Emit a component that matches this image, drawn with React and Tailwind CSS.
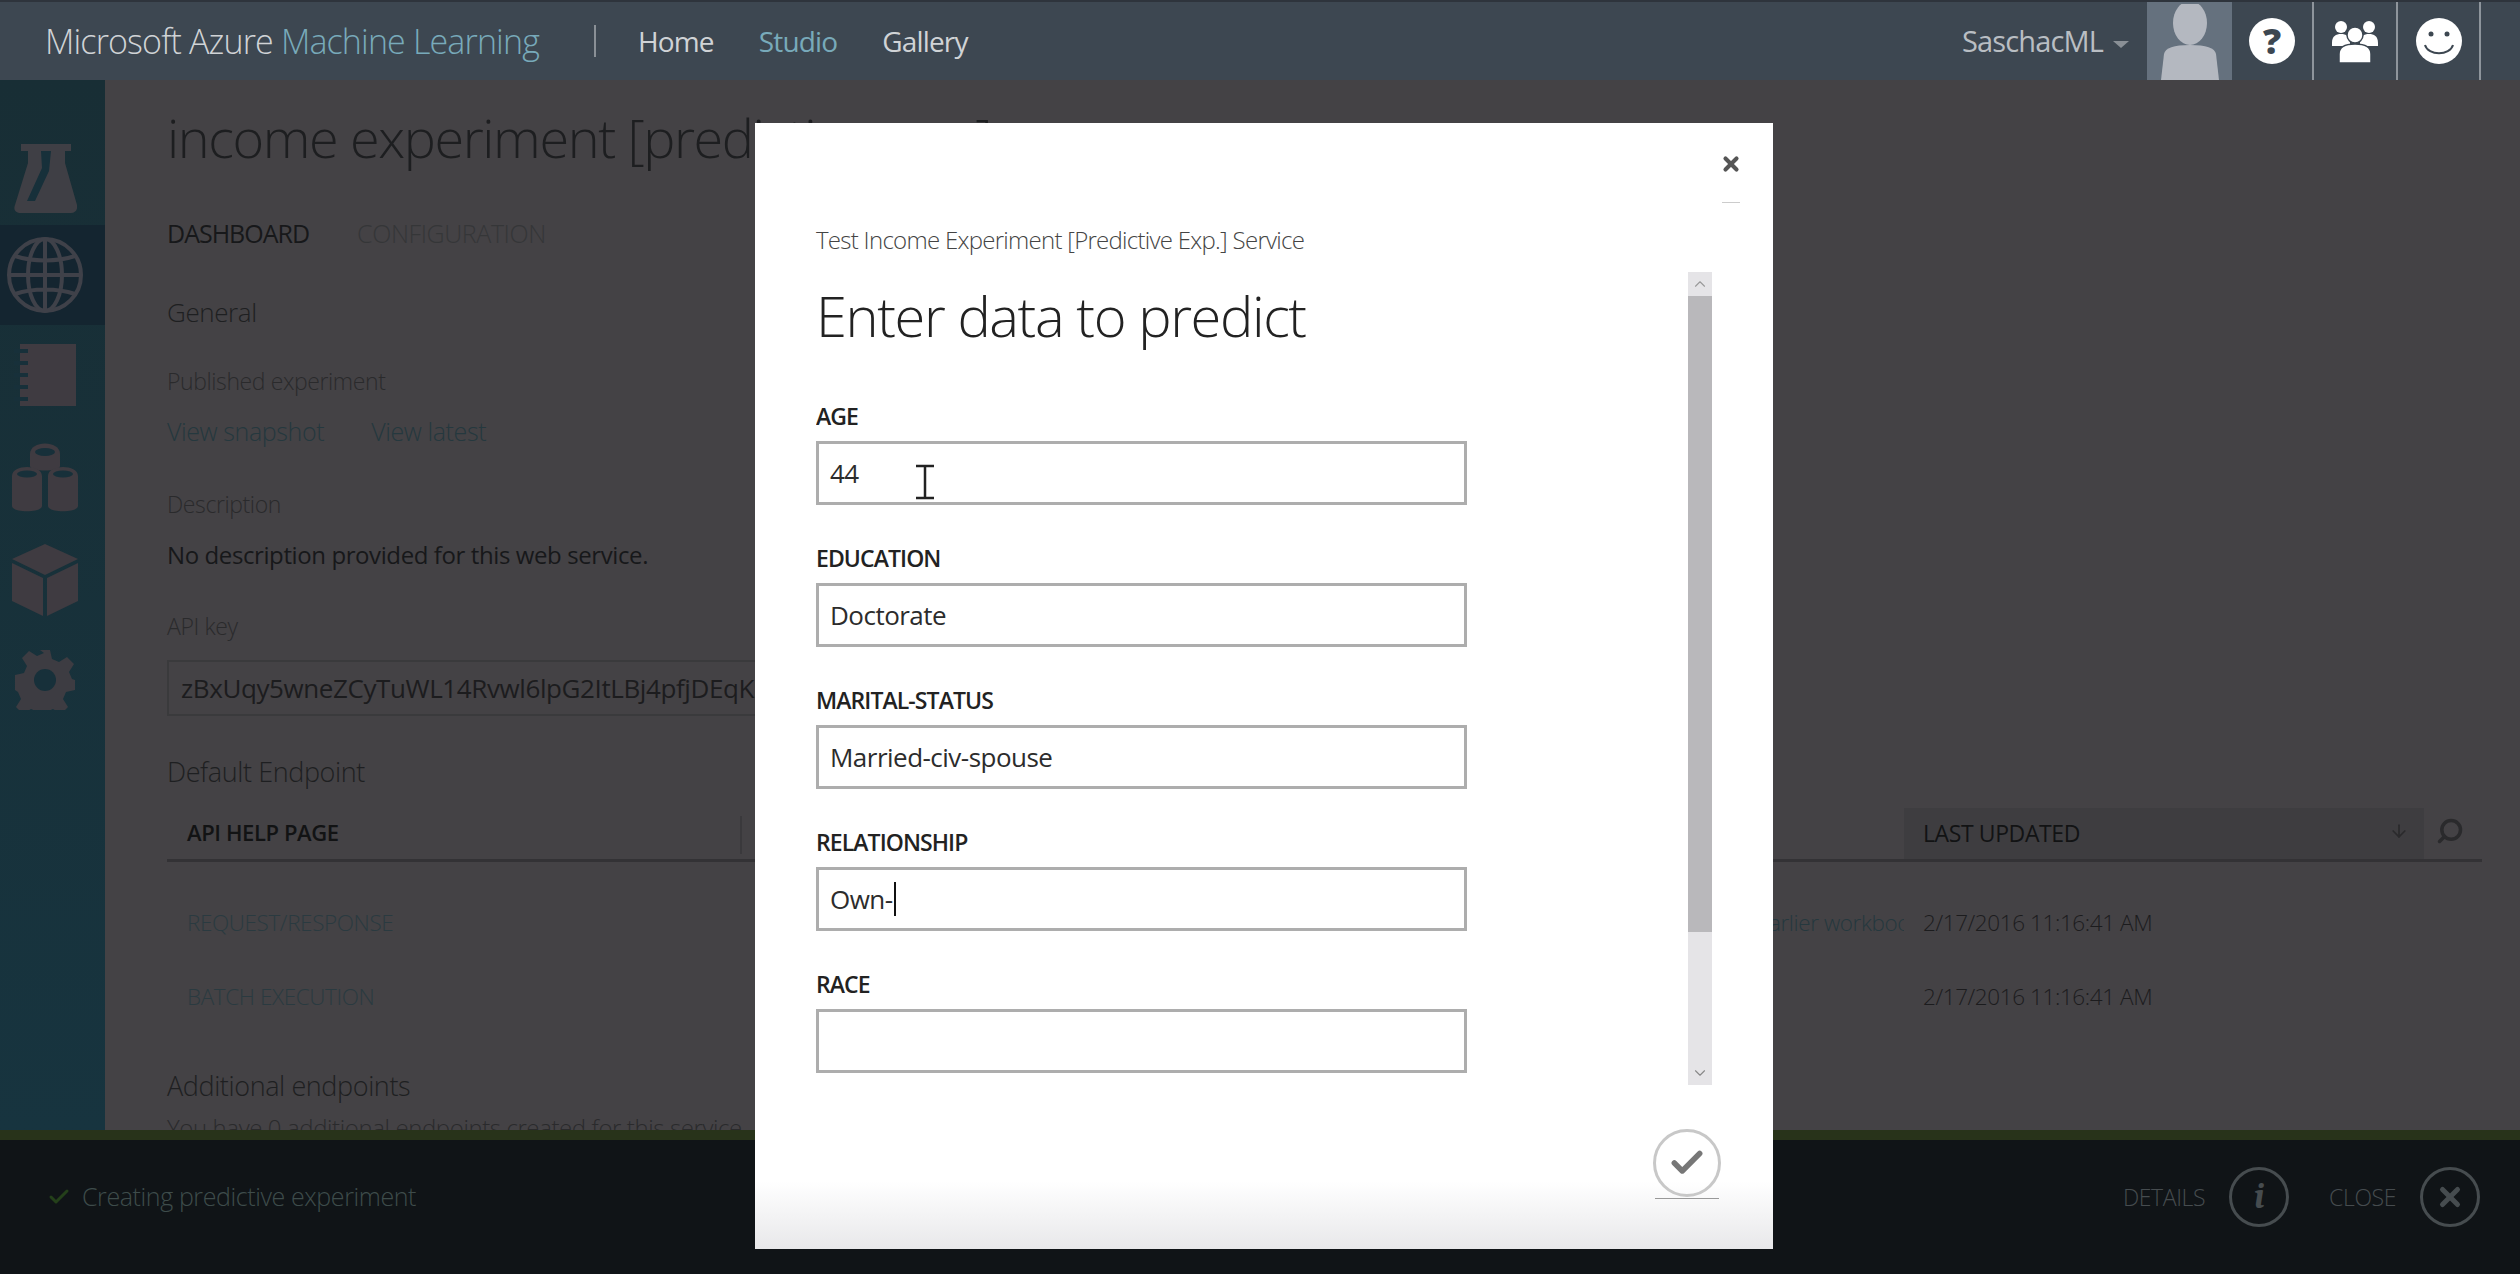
import { Check, ChevronDown, ChevronUp, Search, ArrowDown, X } from "lucide-react";

const font = { fontFamily: '"Open Sans", "Noto Sans", sans-serif' };

const FlaskIcon = () => (
  <svg width="64" height="72" viewBox="0 0 64 72" fill="#3f3f45">
    <path d="M8 2h50v7h-6v12l12 42c1 5-2 8-6 8H8c-5 0-8-3-6-8L15 21V9H8z" />
    <path d="M28 9h10l-2 20-14 30h-8l15-33z" fill="#17303a" />
  </svg>
);

const GlobeIcon = () => (
  <svg width="78" height="78" viewBox="0 0 78 78" fill="none" stroke="#3f4149" strokeWidth="4">
    <circle cx="39" cy="39" r="36" />
    <ellipse cx="39" cy="39" rx="17" ry="36" />
    <path d="M39 3v72M3 39h72M9 20c18 6 42 6 60 0M9 58c18-6 42-6 60 0" />
  </svg>
);

const NotebookIcon = () => (
  <svg width="62" height="64" viewBox="0 0 62 64" fill="#3f3b41">
    <path d="M6 1h56v62H6z" />
    <path d="M0 8h14M0 20h14M0 32h14M0 44h14M0 56h14" stroke="#17303a" strokeWidth="4" fill="none" />
  </svg>
);

const BoxesIcon = () => (
  <svg width="68" height="72" viewBox="0 0 68 72" fill="#3f3b41">
    <path d="M19 12c0-14 30-14 30 0v12c0 6-30 6-30 0z" />
    <ellipse cx="34" cy="10" rx="10" ry="4" fill="#17303a" />
    <path d="M1 34c0-12 30-12 30 0v30c0 7-30 7-30 0zM37 34c0-12 30-12 30 0v30c0 7-30 7-30 0z" />
    <ellipse cx="16" cy="32" rx="10" ry="3.5" fill="#17303a" />
    <ellipse cx="52" cy="32" rx="10" ry="3.5" fill="#17303a" />
  </svg>
);

const CubeIcon = () => (
  <svg width="66" height="72" viewBox="0 0 66 72" fill="#3f3b41">
    <path d="M33 0l33 15-33 16L0 15z" />
    <path d="M0 19l31 15v38L0 57zM35 34l31-15v38L35 72z" />
  </svg>
);

const GearIcon = () => (
  <svg width="60" height="60" viewBox="0 0 60 60" fill="#3d3c42">
    <path d="M25 0h10l2 9 7 3 8-5 7 7-5 8 3 7 3 1v10l-9 2-3 7 5 8-7 7-8-5-7 3-2 9H25l-2-9-7-3-8 5-7-7 5-8-3-7-3-2V25l9-2 3-7-5-8 7-7 8 5 7-3z" />
    <circle cx="30" cy="30" r="11" fill="#17303a" />
  </svg>
);

const AvatarIcon = () => (
  <svg width="70" height="76" viewBox="0 0 70 76" fill="#b4b8c0">
    <ellipse cx="35" cy="19" rx="17" ry="22" />
    <path d="M6 76l3-26c1-6 10-9 26-9s25 3 26 9l3 26z" />
  </svg>
);

const TeamIcon = () => (
  <svg width="46" height="44" viewBox="0 0 46 44" fill="#fff">
    <circle cx="9" cy="8" r="6" />
    <circle cx="37" cy="8" r="6" />
    <path d="M0 24c0-7 4-9 9-9s9 2 9 9v3H0zM28 24c0-7 4-9 9-9s9 2 9 9v3H28z" />
    <circle cx="23" cy="16" r="8" stroke="#3d4751" strokeWidth="1.5" />
    <path d="M7 44V35c0-7 6-10 16-10s16 3 16 10v9z" stroke="#3d4751" strokeWidth="1.5" />
  </svg>
);

const SmileIcon = () => (
  <svg width="46" height="46" viewBox="0 0 46 46">
    <circle cx="23" cy="23" r="23" fill="#fff" />
    <circle cx="15" cy="16" r="2.5" fill="#3d4751" />
    <circle cx="31" cy="16" r="2.5" fill="#3d4751" />
    <path d="M9 27c3 11 25 11 28 0" fill="none" stroke="#3d4751" strokeWidth="2" />
  </svg>
);

const TextCursor = () => (
  <svg width="20" height="36" viewBox="0 0 20 36" fill="none" stroke="#222" strokeWidth="2.5">
    <path d="M1 2h18M1 34h18M10 2v32" />
  </svg>
);

const fields = [
  { label: "AGE", value: "44" },
  { label: "EDUCATION", value: "Doctorate" },
  { label: "MARITAL-STATUS", value: "Married-civ-spouse" },
  { label: "RELATIONSHIP", value: "Own-", caret: true },
  { label: "RACE", value: "" },
];

const Field = ({ label, value, caret }) => (
  <div className="mb-[40px]">
    <div className="h-[26px] flex items-center text-[23px] font-semibold tracking-[-0.04em] text-[#222]">{label}</div>
    <div className="relative mt-[12px] h-[64px] w-[651px] border-[3px] border-[#adadad] bg-white pl-[11px] flex items-center text-[26px] tracking-[-0.02em] text-[#2c2c2c]">
      {value}
      {caret && <span className="ml-px h-[34px] w-[2px] bg-[#111]" />}
    </div>
  </div>
);

const Modal = () => (
  <div className="absolute left-[755px] top-[123px] w-[1018px] h-[1126px] bg-[linear-gradient(to_bottom,#fff_94%,#e8e8ea_100%)]">
    <div className="flex justify-end pt-[30px] pr-[31px] h-[81px]">
      <div className="flex flex-col items-center">
        <X size={22} strokeWidth={4.5} color="#555" />
        <div className="mt-[27px] w-[18px] h-px bg-[#ccc]" />
      </div>
    </div>
    <div className="pl-[61px]">
      <div className="mt-[22px] h-[28px] flex items-center text-[24px] font-light tracking-[-0.03em] text-[#444]">
        Test Income Experiment [Predictive Exp.] Service
      </div>
      <div className="flex mt-[18px]">
        <div className="h-[813px] overflow-hidden">
          <div className="mt-[8px] mb-[53px] h-[70px] flex items-center text-[56px] font-light tracking-[-0.025em] text-[#222]">
            Enter data to predict
          </div>
          {fields.map((f) => (
            <Field key={f.label} {...f} />
          ))}
        </div>
        <div className="ml-[221px] w-[24px] h-[813px] bg-[#e5e4e7] flex flex-col">
          <div className="h-[24px] flex items-center justify-center">
            <ChevronUp size={18} strokeWidth={1.5} color="#999" />
          </div>
          <div className="h-[636px] bg-[#b9b8bb]" />
          <div className="mt-auto h-[24px] flex items-center justify-center">
            <ChevronDown size={18} strokeWidth={1.5} color="#888" />
          </div>
        </div>
      </div>
    </div>
    <div className="flex justify-end pr-[52px] mt-[44px]">
      <div className="flex flex-col items-center">
        <div className="w-[68px] h-[68px] rounded-full border-[3px] border-[#c8c8c8] flex items-center justify-center">
          <Check size={38} strokeWidth={3.5} color="#777" />
        </div>
        <div className="mt-px w-[64px] h-px bg-[#999]" />
      </div>
    </div>
    <div className="absolute left-[160px] top-[341px]">
      <TextCursor />
    </div>
  </div>
);

const Header = () => (
  <div className="h-[80px] shrink-0 bg-[#3d4751] border-t-2 border-[#2e343c] flex items-center pl-[45px] pr-[39px] text-[#d0d3d6]">
    <div className="text-[34px] font-light tracking-[-0.025em] whitespace-nowrap">
      Microsoft Azure <span className="text-[#78aaba]">Machine Learning</span>
    </div>
    <div className="ml-[55px] h-[32px] w-[2px] bg-[#8a9096]" />
    <div className="ml-[42px] text-[28px] tracking-[-0.03em]">Home</div>
    <div className="ml-[45px] text-[28px] tracking-[-0.03em] text-[#78aaba]">Studio</div>
    <div className="ml-[45px] text-[28px] tracking-[-0.03em]">Gallery</div>
    <div className="ml-auto flex items-center h-full">
      <div className="text-[29px] tracking-[-0.03em] text-[#b9bec3]">SaschacML</div>
      <div className="ml-[10px] mt-[6px] w-0 h-0 border-x-[8px] border-x-transparent border-t-[7px] border-t-[#8a9096]" />
      <div className="ml-[18px] w-[85px] h-full bg-[#65717e] flex items-end justify-center overflow-hidden">
        <AvatarIcon />
      </div>
      <div className="w-[82px] h-full flex items-center justify-center border-r-2 border-[#8e959c]">
        <div className="w-[46px] h-[46px] rounded-full bg-white flex items-center justify-center text-[36px] font-extrabold text-[#3d4751]">?</div>
      </div>
      <div className="w-[84px] h-full flex items-center justify-center border-r-2 border-[#8e959c]">
        <TeamIcon />
      </div>
      <div className="w-[83px] h-full flex items-center justify-center border-r-2 border-[#8e959c]">
        <SmileIcon />
      </div>
    </div>
  </div>
);

const Sidebar = () => (
  <div className="w-[105px] shrink-0 bg-[linear-gradient(to_bottom,#182e35,#17343f)] flex flex-col pt-[50px]">
    <div className="h-[95px] flex items-center justify-center pr-[16px]"><FlaskIcon /></div>
    <div className="h-[100px] bg-[#142530] flex items-center justify-center pr-[16px]"><GlobeIcon /></div>
    <div className="h-[100px] flex items-center justify-center pr-[16px]"><NotebookIcon /></div>
    <div className="h-[105px] flex items-center justify-center pr-[16px]"><BoxesIcon /></div>
    <div className="h-[100px] flex items-center justify-center pr-[16px]"><CubeIcon /></div>
    <div className="h-[100px] flex items-center justify-center pr-[16px]"><GearIcon /></div>
  </div>
);

const Main = () => (
  <div className="flex-1 min-w-0 overflow-hidden bg-[#444245] pl-[62px] pr-[38px] pt-[22px] font-light tracking-[-0.025em] whitespace-nowrap">
    <div className="h-[70px] flex items-center text-[54px] tracking-[-0.026em] text-[#1d1e20]">income experiment [predictive exp.]</div>
    <div className="mt-[47px] h-[30px] flex items-center gap-[48px] text-[25px]">
      <span className="text-[#17181a] font-normal tracking-[-0.04em]">DASHBOARD</span>
      <span className="text-[#353638]">CONFIGURATION</span>
    </div>
    <div className="mt-[46px] h-[34px] flex items-center text-[26px] text-[#1e1f21]">General</div>
    <div className="mt-[37px] h-[30px] flex items-center text-[23px] text-[#2a2a2c]">Published experiment</div>
    <div className="mt-[21px] h-[30px] flex items-center gap-[47px] text-[25px] text-[#25383e]">
      <span>View snapshot</span>
      <span>View latest</span>
    </div>
    <div className="mt-[42px] h-[30px] flex items-center text-[23px] text-[#2a2a2c]">Description</div>
    <div className="mt-[21px] h-[30px] flex items-center text-[24px] font-normal text-[#17181a]">No description provided for this web service.</div>
    <div className="mt-[41px] h-[30px] flex items-center text-[23px] text-[#2a2a2c]">API key</div>
    <div className="mt-[19px] h-[56px] w-[800px] border-2 border-[#3a3a3c] pl-[12px] flex items-center text-[26px] font-normal text-[#1c1c1e] overflow-hidden">
      zBxUqy5wneZCyTuWL14Rvwl6lpG2ItLBj4pfjDEqK2
    </div>
    <div className="mt-[39px] h-[34px] flex items-center text-[27px] text-[#1e1f21]">Default Endpoint</div>
    <div className="mt-[19px] h-[54px] flex items-stretch border-b-[3px] border-[#333235]">
      <div className="w-[1737px] pt-[8px] text-[22px] font-semibold text-[#121314]">
        <div className="w-[575px] h-[38px] pl-[20px] border-r-2 border-[#3a393c]">API HELP PAGE</div>
      </div>
      <div className="w-[520px] bg-[#3e3d40] pl-[19px] pr-[15px] pt-[8px] flex justify-between text-[23px] font-normal text-[#121314]">
        <span>LAST UPDATED</span>
        <ArrowDown size={20} color="#2a2a2c" className="mt-[5px]" />
      </div>
      <div className="pl-[12px] pt-[9px]">
        <Search size={28} strokeWidth={3} color="#2a2a2c" className="-scale-x-100" />
      </div>
    </div>
    <div className="mt-[46px] h-[30px] flex items-center text-[22.5px] text-[#2a3a40]">
      <span className="w-[1590px] pl-[20px]">REQUEST/RESPONSE</span>
      <span className="w-[147px] overflow-hidden text-[#25383e]">earlier workbook</span>
      <span className="ml-[19px] text-[22.5px] text-[#1c1c1e]">2/17/2016 11:16:41 AM</span>
    </div>
    <div className="mt-[44px] h-[30px] flex items-center text-[22.5px] text-[#2a3a40]">
      <span className="w-[1756px] pl-[20px]">BATCH EXECUTION</span>
      <span className="text-[22.5px] text-[#1c1c1e]">2/17/2016 11:16:41 AM</span>
    </div>
    <div className="mt-[57px] h-[34px] flex items-center text-[27px] text-[#1e1f21]">Additional endpoints</div>
    <div className="mt-[10px] h-[30px] flex items-center text-[24px] text-[#2a2a2c]">You have 0 additional endpoints created for this service.</div>
  </div>
);

const Footer = () => (
  <div className="h-[144px] shrink-0 bg-[#101417] border-t-[10px] border-[#28331a] flex items-center pl-[47px] pr-[40px] pb-[20px] font-light tracking-[-0.025em]">
    <Check size={24} strokeWidth={3} color="#24401a" />
    <span className="ml-[11px] text-[25px] text-[#3e4c4b]">Creating predictive experiment</span>
    <div className="ml-auto flex items-center text-[23px] text-[#464c4f]">
      <span>DETAILS</span>
      <div className="ml-[24px] w-[60px] h-[60px] rounded-full border-[3px] border-[#464c4f] flex items-center justify-center font-serif italic font-bold text-[36px]">i</div>
      <span className="ml-[40px]">CLOSE</span>
      <div className="ml-[24px] w-[60px] h-[60px] rounded-full border-[3px] border-[#464c4f] flex items-center justify-center">
        <X size={30} strokeWidth={4} color="#464c4f" />
      </div>
    </div>
  </div>
);

export default function App() {
  return (
    <div className="relative w-[2520px] h-[1274px] overflow-hidden flex flex-col" style={font}>
      <Header />
      <div className="flex-1 min-h-0 flex">
        <Sidebar />
        <Main />
      </div>
      <Footer />
      <Modal />
    </div>
  );
}
